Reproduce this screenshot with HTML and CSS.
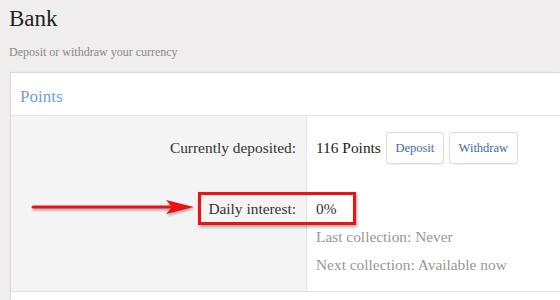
FILE: index.html
```html
<!DOCTYPE html>
<html lang="en">
<head>
  <meta charset="UTF-8" />
  <title>Bank</title>
  <link rel="stylesheet" href="styles.css">
</head>
<body>
  <div class="page">
    <h1>Bank</h1>
    <div class="subtitle">Deposit or withdraw your currency</div>

    <div class="card">
      <div class="card-header">Points</div>

      <div class="row row-deposit">
        <div class="row-label">Currently deposited:</div>
        <div class="row-value">
          <span class="amount">116 Points</span>
          <button class="btn">Deposit</button>
          <button class="btn">Withdraw</button>
        </div>
      </div>

      <div class="row row-interest">
        <div class="row-label">Daily interest:</div>
        <div class="row-value">
          <div class="line">0%</div>
          <div class="line muted">Last collection: Never</div>
          <div class="line muted">Next collection: Available now</div>
        </div>

        <!-- annotation -->
        <div class="highlight"></div>
        <svg class="arrow" width="168" height="20" viewBox="0 0 168 20">
          <line x1="3" y1="10" x2="142" y2="10" stroke="#ee1111" stroke-width="3" stroke-linecap="round" />
          <polygon points="136,3 164,10 136,17 142,10" fill="#ee1111" />
        </svg>
      </div>

      <div class="row row-empty"></div>
    </div>
  </div>
</body>
</html>
```

FILE: styles.css
```css
* {
  box-sizing: border-box;
}

body {
  margin: 0;
  padding: 0;
  background: #efeded;
  color: #333;
  font-family: "Liberation Serif", "Times New Roman", serif;
  overflow: hidden;
}

.page {
  padding: 4px 0 0 9px;
}

h1 {
  font-size: 23px;
  font-weight: normal;
  margin: 0;
  line-height: 30px;
  color: #222;
}

.subtitle {
  font-size: 12px;
  color: #8a8888;
  margin-top: 11px;
  line-height: 14px;
}

.card {
  margin: 13px 0 0 1px;
  background: #fff;
  border: 1px solid #d9d8e2;
  border-right: none;
  border-bottom: none;
  box-shadow: 0 0 2px rgba(0, 0, 0, 0.04);
}

.card-header {
  height: 43px;
  padding: 0 9px;
  line-height: 48px;
  font-size: 17px;
  color: #6f9fdc;
  border-bottom: 1px solid #e6e4e8;
}

.row {
  display: flex;
  border-bottom: 1px solid #e3e1e8;
  position: relative;
}

.row-deposit {
  border-bottom: none;
}

.row-label {
  width: 296px;
  flex: none;
  background: #f3f4f3;
  border-right: 1px solid #e2e2e2;
  text-align: right;
  padding-right: 10px;
  font-size: 15.4px;
}

.row-value {
  padding-left: 9px;
  font-size: 15.4px;
}

.row-deposit .row-label,
.row-deposit .row-value {
  display: flex;
  align-items: center;
  height: 64px;
}

.row-deposit .row-label {
  justify-content: flex-end;
}

.amount {
  color: #222;
  margin-right: 5px;
}

.btn {
  font-family: "Liberation Serif", "Times New Roman", serif;
  font-size: 12.5px;
  color: #3e6aa8;
  background: #fff;
  border: 1px solid #dcdcdc;
  border-radius: 3px;
  height: 32px;
  width: 58px;
  padding: 0;
  margin-right: 5px;
  box-shadow: 0 1px 1px rgba(0, 0, 0, 0.05);
}

.btn + .btn {
  width: 69px;
}

.row-interest .row-label {
  padding-top: 15px;
  line-height: 28px;
}

.row-interest .row-value {
  padding-top: 15px;
  padding-bottom: 12px;
}

.line {
  line-height: 28px;
}

.muted {
  color: #9a9696;
}

.row-empty {
  height: 12px;
  border-bottom: none;
}

.highlight {
  position: absolute;
  left: 187px;
  top: 12px;
  width: 158px;
  height: 33px;
  border: 3px solid #ee1111;
  box-shadow: 1px 2px 3px rgba(0, 0, 0, 0.35);
}

.arrow {
  position: absolute;
  left: 19px;
  top: 17px;
  filter: drop-shadow(1px 2px 1px rgba(0, 0, 0, 0.3));
}
```
